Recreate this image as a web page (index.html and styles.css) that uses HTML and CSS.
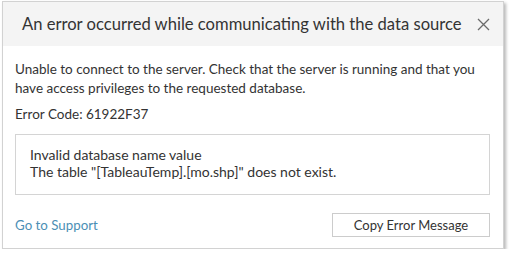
FILE: index.html
```html
<!DOCTYPE html>
<html lang="en">
<head>
    <meta charset="UTF-8">
    <title>Error</title>
    <link rel="stylesheet" href="styles.css">
</head>
<body>
    <div class="dialog">
        <div class="dialog-header">
            <span class="dialog-title">An error occurred while communicating with the data source</span>
            <span class="close">
                <svg width="13" height="13" viewBox="0 0 13 13"><path d="M1 1 L12 12 M12 1 L1 12" stroke="#6b6b6b" stroke-width="1.3" fill="none"/></svg>
            </span>
        </div>

        <div class="dialog-body">
            <p class="message">Unable to connect to the server. Check that the server is running and that you have access privileges to the requested database.</p>
            <p class="code">Error Code: 61922F37</p>

            <div class="details">
                <div>Invalid database name value</div>
                <div>The table "[TableauTemp].[mo.shp]" does not exist.</div>
            </div>

            <div class="dialog-footer">
                <a class="support" href="#">Go to Support</a>
                <button class="copy-btn">Copy Error Message</button>
            </div>
        </div>
    </div>
</body>
</html>
```

FILE: styles.css
```css
body {
    margin: 0;
    padding: 1px 0 0 2px;
    background-color: #fff;
    font-family: Lato, 'Open Sans', sans-serif;
    color: #333;
}

.dialog {
    width: 500px;
    height: 246px;
    border: 1px solid #d2d2d2;
    box-shadow: 2px 2px 3px rgba(0, 0, 0, 0.28);
    background-color: #fff;
}

.dialog-header {
    height: 44px;
    background-color: #f4f4f4;
    display: flex;
    align-items: center;
    justify-content: space-between;
    padding: 0 13px 0 19px;
}

.dialog-title {
    font-size: 16.6px;
    color: #333;
}

.close {
    display: flex;
}

.dialog-body {
    padding: 14px 13px 0 12px;
    font-size: 13.5px;
    line-height: 19px;
}

.message {
    margin: 0;
}

.code {
    margin: 7px 0 0;
}

.details {
    margin-top: 10px;
    height: 41px;
    border: 1px solid #d4d4d4;
    padding: 11px 14px 7px;
    font-size: 14px;
    line-height: 17px;
}

.dialog-footer {
    margin-top: 18px;
    display: flex;
    justify-content: space-between;
    align-items: center;
}

.support {
    color: #4b8fb5;
    font-size: 13.3px;
    text-decoration: none;
}

.copy-btn {
    width: 158px;
    height: 24px;
    border: 1px solid #ccc;
    background-color: #fff;
    font-family: inherit;
    font-size: 13px;
    color: #333;
    padding: 0;
}
```
